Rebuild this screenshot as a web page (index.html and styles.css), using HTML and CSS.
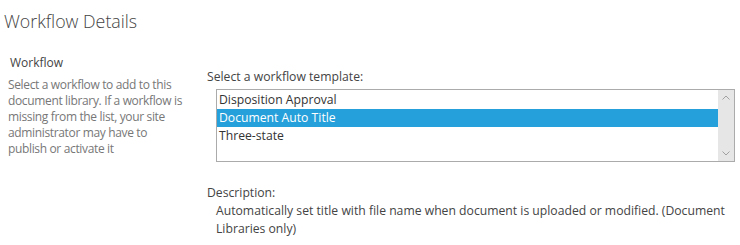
FILE: index.html
```html
<!DOCTYPE html>
<html lang="en">
  <head>
    <meta charset="UTF-8" />
    <title>Workflow Details</title>
    <link rel="stylesheet" href="styles.css">
  </head>
  <body>
    <h1 class="page-title">Workflow Details</h1>

    <div class="section">
      <div class="section-info">
        <h3 class="section-head">Workflow</h3>
        <div class="section-desc">
          Select a workflow to add to this document library. If a workflow is
          missing from the list, your site administrator may have to publish or
          activate it
        </div>
      </div>

      <div class="section-body">
        <div class="field-label">Select a workflow template:</div>
        <div class="listbox">
          <div class="listbox-items">
            <div class="listbox-item">Disposition Approval</div>
            <div class="listbox-item selected">Document Auto Title</div>
            <div class="listbox-item">Three-state</div>
          </div>
          <div class="scrollbar">
            <svg width="16" height="16" viewBox="0 0 16 16">
              <path d="M4.5 9.5 L8 6 L11.5 9.5" fill="none" stroke="#a0a0a0" stroke-width="1" />
            </svg>
            <svg width="16" height="16" viewBox="0 0 16 16">
              <path d="M4.5 6.5 L8 10 L11.5 6.5" fill="none" stroke="#a0a0a0" stroke-width="1" />
            </svg>
          </div>
        </div>

        <div class="field-label desc-label">Description:</div>
        <div class="template-desc">
          Automatically set title with file name when document is uploaded or
          modified. (Document Libraries only)
        </div>
      </div>
    </div>
  </body>
</html>
```

FILE: styles.css
```css
body {
  margin: 0;
  padding: 0;
  font-family: "Open Sans", "Noto Sans", sans-serif;
  color: #444;
  background: #fff;
}
.page-title {
  font-size: 17.8px;
  font-weight: 300;
  margin: 0;
  padding: 8px 0 0 4px;
  line-height: 26px;
  color: #444;
}
.section {
  display: flex;
  margin-top: 20px;
}
.section-info {
  width: 178px;
  padding: 0 12px 0 8px;
}
.section-head {
  font-size: 12px;
  font-weight: normal;
  margin: 0 0 5px 2px;
  line-height: 18px;
  color: #444;
}
.section-desc {
  font-size: 12px;
  letter-spacing: -0.35px;
  line-height: 16px;
  color: #777;
}
.section-body {
  flex: 1;
  padding-top: 14px;
  padding-left: 9px;
  padding-right: 5px;
}
.field-label {
  font-size: 12.2px;
  line-height: 18px;
  color: #444;
}
.listbox {
  display: flex;
  margin: 3px 0 0 9px;
  height: 71px;
  border: 1px solid #ababab;
}
.listbox-items {
  flex: 1;
  padding-top: 1px;
}
.listbox-item {
  font-size: 12.2px;
  line-height: 18px;
  padding-left: 2px;
  color: #333;
}
.listbox-item.selected {
  background: #26a0da;
  color: #fff;
}
.scrollbar {
  width: 16px;
  background: #e6e6e6;
  display: flex;
  flex-direction: column;
  justify-content: space-between;
}
.scrollbar svg {
  display: block;
}
.desc-label {
  margin-top: 22px;
}
.template-desc {
  font-size: 12.2px;
  line-height: 18px;
  margin-left: 9px;
  color: #444;
}
```
